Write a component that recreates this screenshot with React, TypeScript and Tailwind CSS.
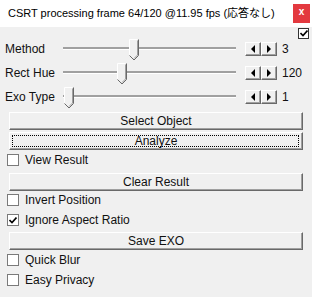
import React from "react";

const font = { fontFamily: '"Liberation Sans", "Noto Sans CJK JP", sans-serif' };

// Trackbar thumb: pentagon pointing down, classic 3D edges
const Thumb = () => (
  <svg width="10" height="22" viewBox="0 0 10 22" className="block">
    <polygon points="0.5,0.5 9.5,0.5 9.5,16.5 5,21 0.5,16.5" fill="#f0f0f0" />
    <polyline points="0.5,16.5 0.5,0.5 8.5,0.5" fill="none" stroke="#ffffff" />
    <polyline points="9.5,0.5 9.5,16.5 5,21 0.5,16.5" fill="none" stroke="#696969" />
    <polyline points="8.5,1.5 8.5,16 5,19.5" fill="none" stroke="#a0a0a0" />
  </svg>
);

const SpinButton = ({ dir }: { dir: "left" | "right" }) => (
  <div className="w-[16px] h-[14px] bg-[#f0f0f0] border-t border-l border-t-white border-l-white border-r border-b border-r-[#696969] border-b-[#696969] shadow-[inset_-1px_-1px_0_#a0a0a0] flex items-center justify-center">
    <svg width="4" height="8" viewBox="0 0 4 8" className="block">
      {dir === "left" ? (
        <polygon points="4,0 4,8 0,4" fill="#000" />
      ) : (
        <polygon points="0,0 0,8 4,4" fill="#000" />
      )}
    </svg>
  </div>
);

const SliderRow = ({ label, value, pos }: { label: string; value: string; pos: number }) => (
  <div className="h-[24px] flex items-center">
    <div className="w-[63px] pl-[5px] text-[12px] text-[#111] leading-none mt-[1px]">{label}</div>
    <div className="relative w-[173px] h-[24px] flex items-center">
      <div className="w-full h-[3px] border-t border-t-[#a0a0a0] bg-[#a0a0a0] border-b border-b-white" />
      <div className="absolute top-[3px]" style={{ left: pos }}>
        <Thumb />
      </div>
    </div>
    <div className="ml-[9px] flex mt-[2px]">
      <SpinButton dir="left" />
      <SpinButton dir="right" />
    </div>
    <div className="ml-[5px] text-[12px] text-[#111] leading-none mt-[1px]">{value}</div>
  </div>
);

const Button = ({ label, focused, className = "" }: { label: string; focused?: boolean; className?: string }) => (
  <div
    className={`mx-[9px] h-[18px] bg-[#f0f0f0] border-t border-l border-t-white border-l-white border-r border-b border-r-[#696969] border-b-[#696969] shadow-[inset_-1px_-1px_0_#a0a0a0] flex items-center justify-center relative ${className}`}
  >
    {focused && (
      <div className="absolute left-[2px] right-[3px] top-[2px] bottom-[2px] border border-dotted border-black" />
    )}
    <span className="text-[12px] text-[#111] leading-none">{label}</span>
  </div>
);

const Check = ({ label, checked, className = "" }: { label: string; checked?: boolean; className?: string }) => (
  <div className={`h-[20px] flex items-center pl-[7px] ${className}`}>
    <div className="w-[12px] h-[12px] bg-white border border-[#7a7a7a] flex items-center justify-center">
      {checked && (
        <svg width="8" height="7" viewBox="0 0 8 7" className="block">
          <polyline points="0.5,3 3,5.5 7.5,0.5" fill="none" stroke="#000" strokeWidth="1.6" />
        </svg>
      )}
    </div>
    <span className="ml-[6px] text-[12px] text-[#111] leading-none">{label}</span>
  </div>
);

export default function App() {
  return (
    <div className="w-[312px] h-[297px] bg-[#f0f0f0] overflow-hidden" style={font}>
      {/* Title bar */}
      <div className="h-[27px] bg-white flex items-center justify-between pl-[8px] pr-[2px]">
        <span className="text-[11px] text-black leading-none whitespace-nowrap">CSRT processing frame 64/120 @11.95 fps (応答なし)</span>
        <div className="shrink-0 w-[17px] h-[19px] bg-[#e3393f] flex items-center justify-center -mt-[1px]">
          <span className="text-white text-[10px] font-bold leading-none pb-[2px]">x</span>
        </div>
      </div>

      <div className="relative pt-[9px]">
        <div className="absolute right-[3px] top-[1px] w-[11px] h-[11px] bg-white border border-[#333] flex items-center justify-center">
          <svg width="8" height="7" viewBox="0 0 8 7" className="block">
            <polyline points="0.5,3 3,5.5 7.5,0.5" fill="none" stroke="#000" strokeWidth="1.6" />
          </svg>
        </div>

        <SliderRow label="Method" value="3" pos={66} />
        <SliderRow label="Rect Hue" value="120" pos={54} />
        <SliderRow label="Exo Type" value="1" pos={1} />

        <div className="mt-[4px] flex flex-col">
          <Button label="Select Object" />
          <Button label="Analyze" focused className="mt-[2px]" />
          <Check label="View Result" />
          <Button label="Clear Result" className="mt-[3px]" />
          <Check label="Invert Position" className="-mt-[1px]" />
          <Check label="Ignore Aspect Ratio" checked />
          <Button label="Save EXO" className="mt-[2px]" />
          <Check label="Quick Blur" />
          <Check label="Easy Privacy" />
        </div>
      </div>
    </div>
  );
}
